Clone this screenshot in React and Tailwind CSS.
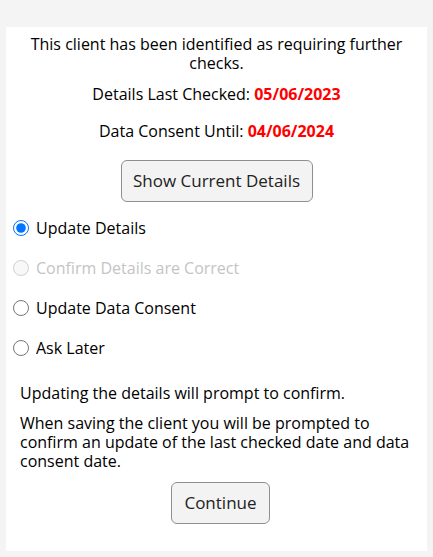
import { useState } from 'react'

const OPTIONS = [
  { id: 'update', label: 'Update Details' },
  { id: 'confirm', label: 'Confirm Details are Correct', disabled: true },
  { id: 'consent', label: 'Update Data Consent' },
  { id: 'later', label: 'Ask Later' },
]

function App() {
  const [choice, setChoice] = useState('update')

  return (
    <div className="min-h-screen bg-[#f4f4f4] px-[6px] pt-[27px] pb-[7px] font-['Open_Sans',sans-serif] text-[16px] text-black">
      <div className="bg-white pt-[8px] pb-[27px]">
        <div className="px-[20px] text-center">
          <p className="leading-[19px]">This client has been identified as requiring further checks.</p>
          <p className="mt-[12px] leading-[19px]">
            Details Last Checked: <span className="font-bold text-[#ff0000]">05/06/2023</span>
          </p>
          <p className="mt-[18px] leading-[19px]">
            Data Consent Until: <span className="font-bold text-[#ff0000]">04/06/2024</span>
          </p>
          <button className="mt-[19px] h-[42px] w-[192px] rounded-[6px] border border-[#8f8f8f] bg-[#f3f3f3] text-[17px] text-[#222]">
            Show Current Details
          </button>
        </div>

        <div className="mt-[6px] flex flex-col px-[7px]">
          {OPTIONS.map(opt => (
            <label
              key={opt.id}
              className={`flex h-[40px] items-center gap-[7px] ${opt.disabled ? 'text-[#c4c4c4]' : 'text-black'}`}
            >
              <input
                type="radio"
                name="choice"
                className="m-0 h-[16px] w-[16px] accent-[#0075ff]"
                checked={choice === opt.id}
                disabled={opt.disabled}
                onChange={() => setChoice(opt.id)}
              />
              <span>{opt.label}</span>
            </label>
          ))}
        </div>

        <div className="mt-[16px] pl-[14px] pr-[6px]">
          <p className="leading-[19px]">Updating the details will prompt to confirm.</p>
          <p className="mt-[11px] leading-[19px]">
            When saving the client you will be prompted to confirm an update of the last checked date and data consent date.
          </p>
          <div className="mt-[11px] flex justify-center">
            <button className="h-[42px] w-[99px] rounded-[6px] border border-[#8f8f8f] bg-[#f3f3f3] text-[17px] text-[#222]">
              Continue
            </button>
          </div>
        </div>
      </div>
    </div>
  )
}

export default App
